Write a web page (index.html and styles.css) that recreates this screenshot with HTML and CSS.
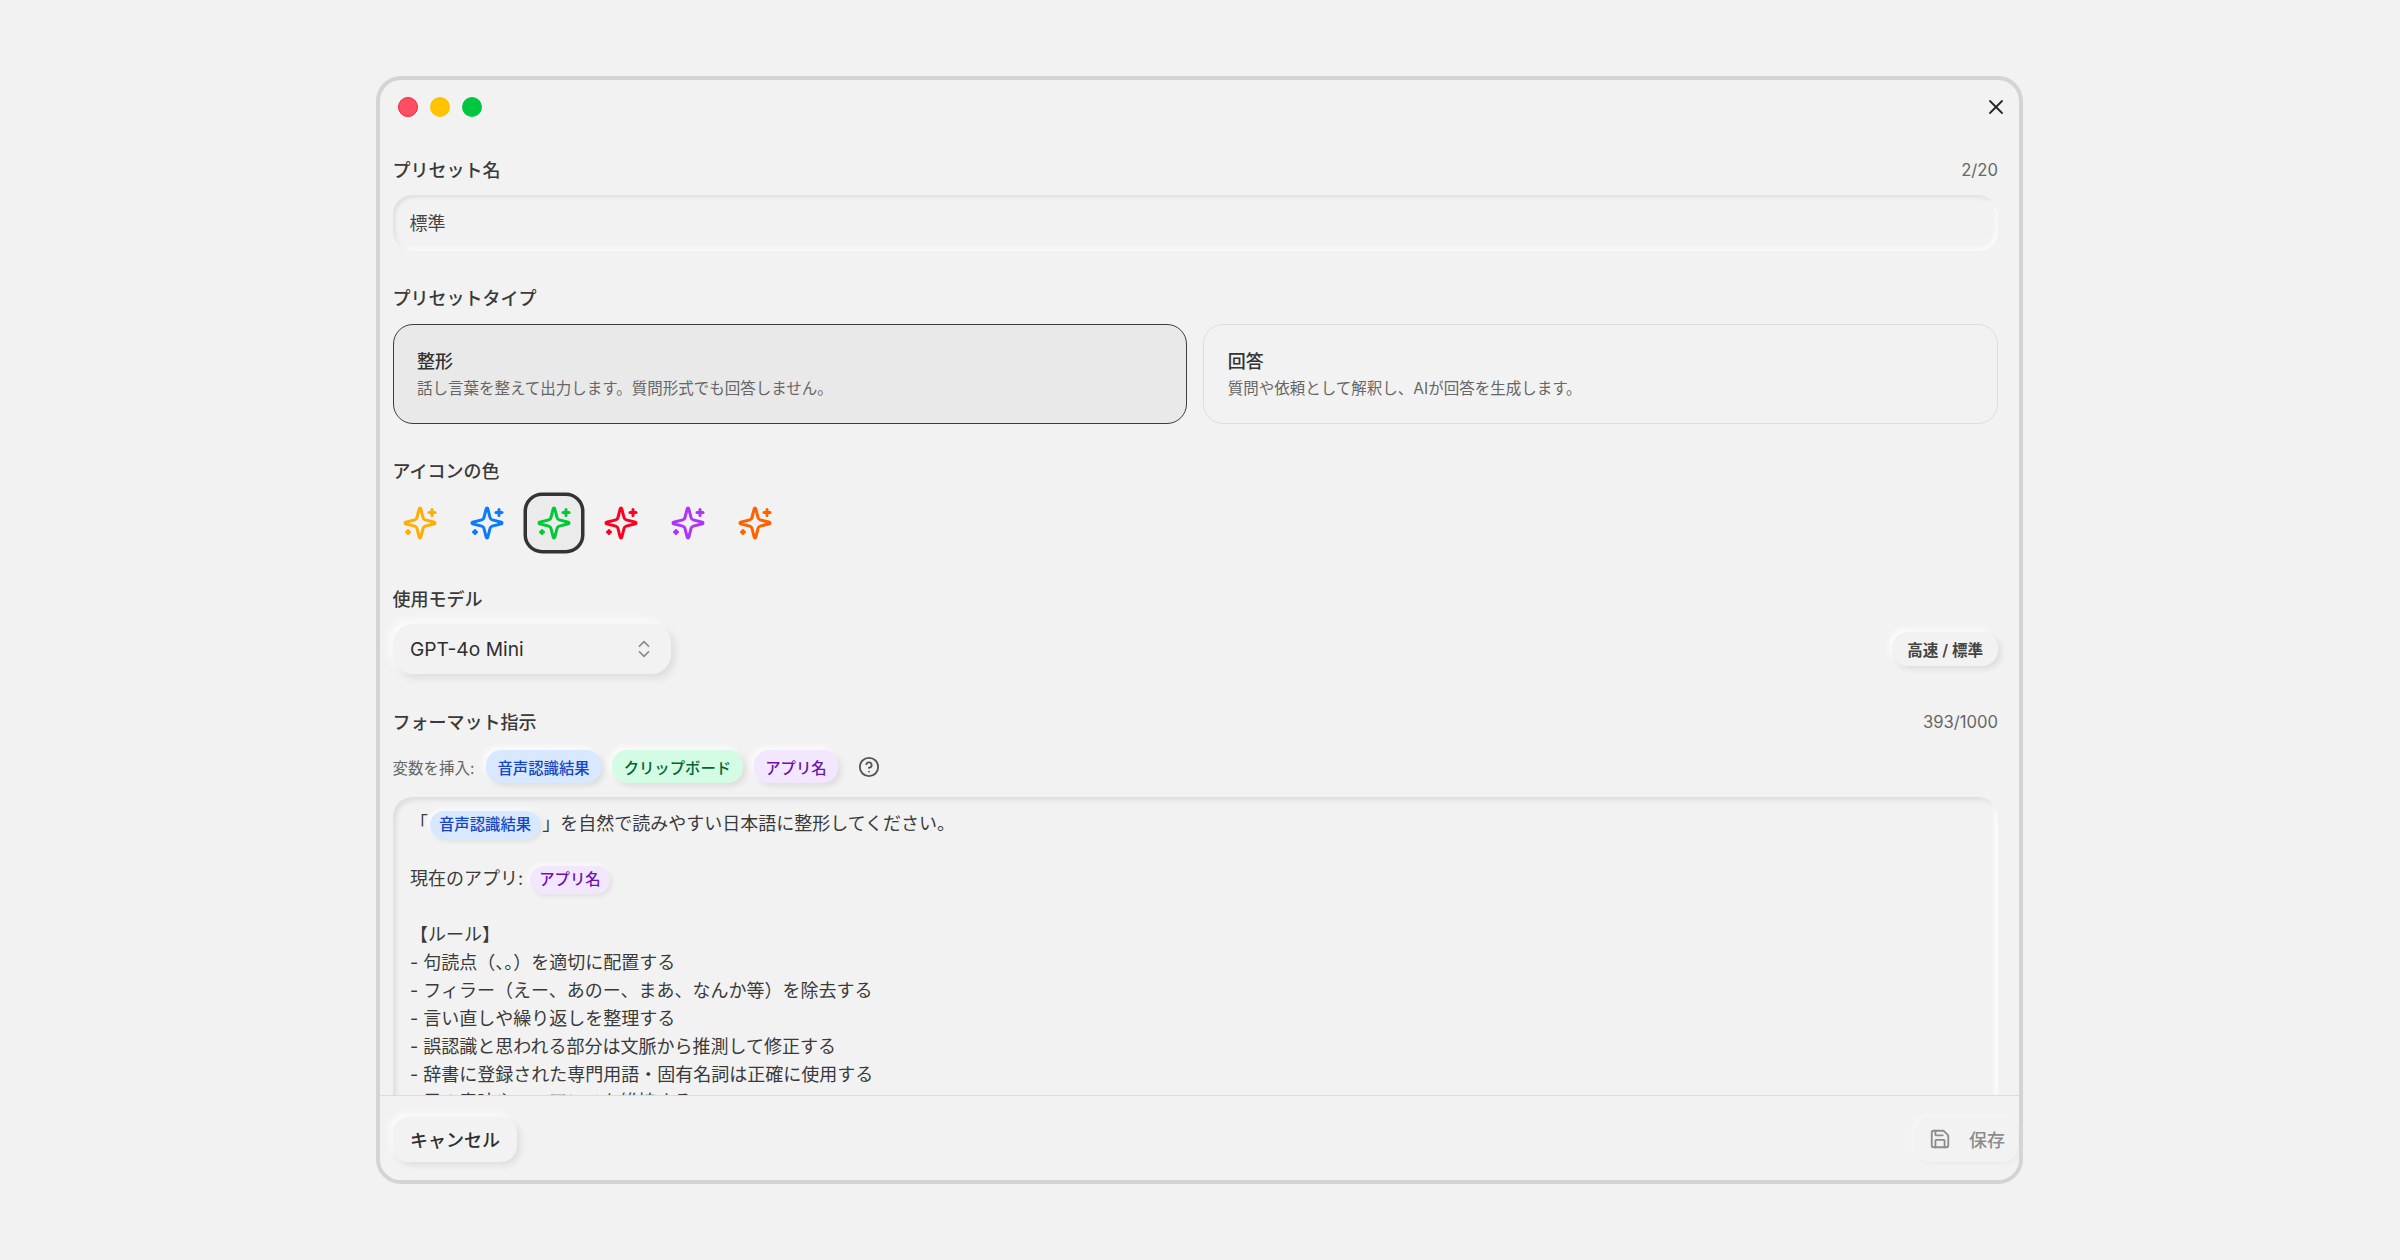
FILE: index.html
```html
<!DOCTYPE html>
<html lang="ja">
<head>
<meta charset="utf-8">
<title>プリセット編集</title>
<link rel="stylesheet" href="styles.css">
</head>
<body>
<div class="window">
  <header class="titlebar">
    <div class="lights">
      <span class="light light-red"></span>
      <span class="light light-yellow"></span>
      <span class="light light-green"></span>
    </div>
    <svg class="close" viewBox="0 0 24 24"><path d="M18 6 6 18"/><path d="m6 6 12 12"/></svg>
  </header>
  <main class="content">
    <section class="section section-name">
      <div class="label-row"><span class="label">プリセット名</span><span class="count">2/20</span></div>
      <div class="input">標準</div>
    </section>
    <section class="section section-type">
      <div class="label-row"><span class="label">プリセットタイプ</span></div>
      <div class="cards">
        <div class="card card-active">
          <div class="card-title">整形</div>
          <div class="card-desc">話し言葉を整えて出力します。質問形式でも回答しません。</div>
        </div>
        <div class="card">
          <div class="card-title">回答</div>
          <div class="card-desc">質問や依頼として解釈し、AIが回答を生成します。</div>
        </div>
      </div>
    </section>
    <section class="section section-color">
      <div class="label-row"><span class="label">アイコンの色</span></div>
      <div class="swatches">
        <button class="swatch c-amber"><svg class="spark" viewBox="0 0 24 24"><use href="#sparkles"/></svg></button>
        <button class="swatch c-blue"><svg class="spark" viewBox="0 0 24 24"><use href="#sparkles"/></svg></button>
        <button class="swatch swatch-on c-green"><svg class="spark" viewBox="0 0 24 24"><use href="#sparkles"/></svg></button>
        <button class="swatch c-red"><svg class="spark" viewBox="0 0 24 24"><use href="#sparkles"/></svg></button>
        <button class="swatch c-purple"><svg class="spark" viewBox="0 0 24 24"><use href="#sparkles"/></svg></button>
        <button class="swatch c-orange"><svg class="spark" viewBox="0 0 24 24"><use href="#sparkles"/></svg></button>
      </div>
    </section>
    <section class="section">
      <div class="label-row"><span class="label">使用モデル</span></div>
      <div class="model-row">
        <div class="select">
          <span>GPT-4o Mini</span>
          <svg class="updown" viewBox="0 0 24 24"><path d="m7 15 5 5 5-5"/><path d="m7 9 5-5 5 5"/></svg>
        </div>
        <span class="badge">高速 / 標準</span>
      </div>
    </section>
    <section class="section">
      <div class="label-row"><span class="label">フォーマット指示</span><span class="count">393/1000</span></div>
      <div class="vars">
        <span class="vars-label">変数を挿入:</span>
        <span class="chip chip-blue">音声認識結果</span>
        <span class="chip chip-green">クリップボード</span>
        <span class="chip chip-purple">アプリ名</span>
        <svg class="help" viewBox="0 0 24 24"><circle cx="12" cy="12" r="10"/><path d="M9.09 9a3 3 0 0 1 5.83 1c0 2-3 3-3 3"/><path d="M12 17h.01"/></svg>
      </div>
      <div class="editor">
        <div class="line">「<span class="pill chip-blue">音声認識結果</span>」を自然で読みやすい日本語に整形してください。</div>
        <div class="line">&nbsp;</div>
        <div class="line">現在のアプリ: <span class="pill chip-purple">アプリ名</span></div>
        <div class="line">&nbsp;</div>
        <div class="line">【ルール】</div>
        <div class="line">- 句読点（、。）を適切に配置する</div>
        <div class="line">- フィラー（えー、あのー、まあ、なんか等）を除去する</div>
        <div class="line">- 言い直しや繰り返しを整理する</div>
        <div class="line">- 誤認識と思われる部分は文脈から推測して修正する</div>
        <div class="line">- 辞書に登録された専門用語・固有名詞は正確に使用する</div>
        <div class="line">- 元の意味やニュアンスを維持する</div>
      </div>
    </section>
  </main>
  <footer class="footer">
    <button class="btn">キャンセル</button>
    <button class="btn btn-save">
      <svg class="save-icon" viewBox="0 0 24 24"><path d="M15.2 3a2 2 0 0 1 1.4.6l3.8 3.8a2 2 0 0 1 .6 1.4V19a2 2 0 0 1-2 2H5a2 2 0 0 1-2-2V5a2 2 0 0 1 2-2z"/><path d="M17 21v-7a1 1 0 0 0-1-1H8a1 1 0 0 0-1 1v7"/><path d="M7 3v4a1 1 0 0 0 1 1h7"/></svg>
      <span>保存</span>
    </button>
  </footer>
</div>
<svg class="defs" aria-hidden="true">
  <symbol id="sparkles" viewBox="0 0 24 24">
    <path d="M9.937 15.5A2 2 0 0 0 8.5 14.063l-6.135-1.582a.5.5 0 0 1 0-.962L8.5 9.936A2 2 0 0 0 9.937 8.5l1.582-6.135a.5.5 0 0 1 .963 0L14.063 8.5A2 2 0 0 0 15.5 9.937l6.135 1.581a.5.5 0 0 1 0 .964L15.5 14.063a2 2 0 0 0-1.437 1.437l-1.582 6.135a.5.5 0 0 1-.963 0z"/>
    <path d="M20 3v4"/><path d="M22 5h-4"/><path d="M4 17v2"/><path d="M5 18H3"/>
  </symbol>
</svg>
</body>
</html>
```
FILE: styles.css
```css
* { box-sizing: border-box; }
html, body { margin: 0; height: 100%; }
body {
  background: #f2f2f2;
  color: #2e2e2e;
  font-family: Inter, "Noto Sans CJK JP", sans-serif;
  font-size: 18px;
  overflow: hidden;
  padding: 76px 377px 76px 376px;
}
button { font: inherit; color: inherit; border: 0; background: none; padding: 0; }
.defs { display: none; }

.window {
  width: 1647px;
  height: 1108px;
  border: 4px solid #d4d4d4;
  border-radius: 25px;
  background: #f2f2f2;
  display: flex;
  flex-direction: column;
  overflow: hidden;
}

.titlebar {
  flex: none;
  height: 54px;
  padding: 0 11px 0 18px;
  display: flex;
  align-items: center;
  justify-content: space-between;
}
.lights { display: flex; gap: 12px; }
.light { width: 20px; height: 20px; border-radius: 50%; }
.light-red { background: #ff4d63; border: 1px solid #f2213f; }
.light-yellow { background: #ffc300; }
.light-green { background: #00c73f; }
.close { width: 24px; height: 24px; fill: none; stroke: #262626; stroke-width: 1.8; stroke-linecap: round; stroke-linejoin: round; }

.content {
  flex: 1;
  min-height: 0;
  overflow: hidden;
  padding: 21px 21px 0 12.5px;
  display: flex;
  flex-direction: column;
  gap: 33px;
}
.section { flex: none; }
.section-name { margin-bottom: -1px; }
.section-type { margin-bottom: -1px; }
.section-type .label-row { margin-bottom: 13px; }
.section-color { margin-bottom: 1px; }
.label-row {
  height: 28px;
  margin-bottom: 12px;
  display: flex;
  align-items: center;
  justify-content: space-between;
}
.label { font-weight: 500; color: #3a3a3a; }
.count { padding-top: 2px; font-size: 16.64px; color: #666; }

.input {
  height: 56px;
  padding: 0 17px 2px;
  display: flex;
  align-items: center;
  border-radius: 20px;
  color: #444;
  box-shadow: inset 2px 2px 4px rgba(0,0,0,.09), inset -2px -2px 4px rgba(255,255,255,.85);
}

.cards { display: grid; grid-template-columns: 1fr 1fr; gap: 16px; }
.card {
  height: 99.5px;
  padding: 3px 23.5px 0;
  border: 1.5px solid #dedede;
  border-radius: 20px;
  display: flex;
  flex-direction: column;
  justify-content: center;
  gap: 0;
}
.card-active { background: #e9e9e9; border-color: #3c3c3c; }
.card-title { font-weight: 500; line-height: 28px; color: #333; }
.card-desc { font-size: 15.5px; line-height: 26px; color: #666; }

.swatches { padding-left: 0.5px; padding-top: 0.5px; display: flex; gap: 13px; }
.swatch {
  width: 54px;
  height: 54px;
  border-radius: 15px;
  display: flex;
  align-items: center;
  justify-content: center;
}
.swatch-on { background: #ebebeb; box-shadow: 0 0 0 3.5px #333; }
.spark { width: 36px; height: 36px; fill: none; stroke: currentColor; stroke-width: 2; stroke-linecap: round; stroke-linejoin: round; }
.c-amber { color: #ffae00; }
.c-blue { color: #0a7aff; }
.c-green { color: #00c936; }
.c-red { color: #fb0022; }
.c-purple { color: #ad33ff; }
.c-orange { color: #ff6000; }

.model-row { display: flex; align-items: center; justify-content: space-between; }
.select {
  width: 278px;
  height: 50px;
  margin-left: 0.5px;
  padding: 0 17px;
  display: flex;
  align-items: center;
  justify-content: space-between;
  border-radius: 20px;
  font-size: 19.2px;
  box-shadow: 4px 4px 8px rgba(0,0,0,.09), -4px -4px 8px rgba(255,255,255,.8);
}
.updown { width: 22px; height: 22px; margin-right: -1px; fill: none; stroke: #8a8a8a; stroke-width: 1.8; stroke-linecap: round; stroke-linejoin: round; }
.badge {
  height: 34px;
  padding: 0 15px;
  display: flex;
  align-items: center;
  border-radius: 16px;
  font-size: 15.5px;
  font-weight: 600;
  color: #444;
  box-shadow: 3px 3px 6px rgba(0,0,0,.09), -3px -3px 6px rgba(255,255,255,.8);
}

.vars { margin-top: 15px; display: flex; align-items: center; gap: 11px; height: 33px; }
.vars-label { font-size: 15.5px; color: #666; margin-right: 0.5px; }
.chip {
  height: 33px;
  padding: 0 11.5px;
  display: flex;
  align-items: center;
  border-radius: 15px;
  font-size: 15.36px;
  font-weight: 500;
  box-shadow: 3px 3px 6px rgba(0,0,0,.09), -3px -3px 6px rgba(255,255,255,.8);
}
.chip-blue { background: #d8e9ff; color: #1546c4; }
.chip-green { background: #d4fbe3; color: #016630; }
.chip-purple { background: #f2e7ff; color: #6e11b0; }
.help { width: 22px; height: 22px; margin-left: 8.5px; fill: none; stroke: #555; stroke-width: 2; stroke-linecap: round; stroke-linejoin: round; }

.editor {
  margin-top: 14px;
  height: 400px;
  padding: 12.5px 17.5px;
  border-radius: 20px;
  color: #3a3a3a;
  box-shadow: inset 3px 3px 5px rgba(0,0,0,.09), inset -3px -3px 5px rgba(255,255,255,.85);
}
.line { height: 27.9px; line-height: 27.9px; white-space: pre; }
.pill {
  display: inline-block;
  height: 28px;
  line-height: 28px;
  padding: 0 9px;
  margin: 0 2px;
  vertical-align: middle;
  border-radius: 14px;
  font-size: 15.36px;
  font-weight: 500;
  box-shadow: 2px 2px 5px rgba(0,0,0,.08), -2px -2px 5px rgba(255,255,255,.8);
}

.footer {
  flex: none;
  height: 85px;
  border-top: 1px solid #dcdcdc;
  padding: 2px 1px 0 13px;
  display: flex;
  align-items: center;
  justify-content: space-between;
  background: #f2f2f2;
  position: relative;
}
.btn {
  height: 45px;
  padding: 0 17px;
  display: flex;
  align-items: center;
  border-radius: 16px;
  font-weight: 500;
  box-shadow: 3px 3px 7px rgba(0,0,0,.09), -3px -3px 7px rgba(255,255,255,.8);
}
.btn-save { gap: 18px; padding: 0 13px 0 15px; color: #8c8c8c; box-shadow: 2px 2px 5px rgba(0,0,0,.035), -2px -2px 5px rgba(255,255,255,.45); }
.save-icon { width: 22px; height: 22px; fill: none; stroke: currentColor; stroke-width: 2; stroke-linecap: round; stroke-linejoin: round; }
```
